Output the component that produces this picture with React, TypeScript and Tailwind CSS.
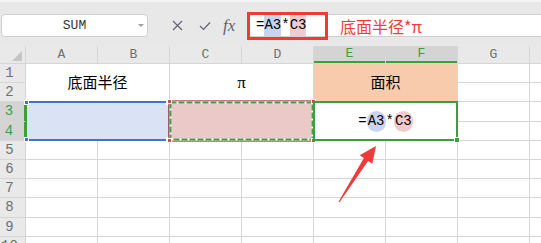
import React from "react";

const COLS = ["A", "B", "C", "D", "E", "F", "G", ""];
const mono = "[font-family:'Liberation_Mono',monospace]";

function ColHeader({ label }: { label: string }) {
  const sel = label === "E" || label === "F";
  return (
    <div
      className={`flex items-center justify-center text-[13px] ${mono} ${
        sel ? "bg-[#d4d4d4] text-[#3c9e3c] border-b-2 border-[#3c9e3c]" : "bg-[#e9e9e9] text-[#707070]"
      }`}
    >
      {label}
    </div>
  );
}

function RowHeader({ n }: { n: number }) {
  const sel = n === 3 || n === 4;
  return (
    <div
      className={`flex items-center justify-center pr-[6px] text-[14px] ${mono} ${
        sel ? "bg-[#d4d4d4] text-[#3c9e3c] border-r border-[#3c9e3c]" : "bg-[#e9e9e9] text-[#707070]"
      }`}
    >
      {n}
    </div>
  );
}

function Blank() {
  return <div className="bg-white" />;
}

function Toolbar() {
  return (
    <div className="h-[46px] bg-[#e8e8e8] border-t-2 border-[#f4f4f4] flex items-start pt-[12px]">
      <div
        className={`relative ml-px w-[147px] h-[23px] bg-white border border-[#d0d0d0] rounded-[4px] flex items-center justify-center text-[13px] text-[#333] ${mono}`}
      >
        SUM
        <span className="absolute right-[3px] top-[9px] border-x-[3px] border-t-[3px] border-x-transparent border-t-[#a0a0a0]" />
      </div>
      <div className="w-[99px] h-[23px] flex items-center shrink-0">
        <svg width="11" height="11" viewBox="0 0 11 11" className="ml-[24px]">
          <path d="M1 1L10 10M10 1L1 10" stroke="#5f6470" strokeWidth="1.2" fill="none" />
        </svg>
        <svg width="12" height="10" viewBox="0 0 12 10" className="ml-[16px]">
          <path d="M1 5L4.5 8.5L11 1.5" stroke="#5f6470" strokeWidth="1.2" fill="none" />
        </svg>
        <span className="ml-[12px] text-[17px] italic text-[#5f6470] [font-family:'Liberation_Serif',serif]">fx</span>
      </div>
      <div className="flex-1 h-[23px] bg-white border-y border-[#cfcfcf] flex items-center">
        <div className={`shrink-0 w-[81px] h-[28px] border-[3px] border-[#f03a3a] flex items-center pl-[6px] text-[14px] text-black ${mono}`}>
          =<span className="bg-[#c8d5f2]">A3</span>*<span className="bg-[#f0cccc]">C3</span>
        </div>
        <span className="ml-[12px] text-[16px] text-[#f23b3b] [font-family:'Noto_Sans_CJK_SC',sans-serif]">底面半径*π</span>
      </div>
    </div>
  );
}

function Sheet() {
  const handle = "absolute w-[5px] h-[5px] border border-white";
  return (
    <div className="grid grid-cols-[25px_repeat(7,71px)_20px] grid-rows-[17px_18px_18px_19px_18px_18px_18px_18px_19px_18px_18px] gap-px bg-[#d6d6d6]">
      <div className="relative bg-[#e9e9e9]">
        <svg width="10" height="10" viewBox="0 0 10 10" className="absolute right-[3px] bottom-[2px]">
          <path d="M10 0V10H0Z" fill="#c4c4c4" />
        </svg>
      </div>
      {COLS.map((c, i) => (
        <ColHeader key={i} label={c} />
      ))}

      {/* row 1 */}
      <RowHeader n={1} />
      <div className="col-span-2 row-span-2 bg-white flex items-center justify-center text-[15px] text-black">底面半径</div>
      <div className="col-span-2 row-span-2 bg-white flex items-center justify-center text-[17px] text-black [font-family:'Liberation_Serif',serif]">π</div>
      <div className="col-span-2 row-span-2 bg-[#f8cbad] flex items-center justify-center text-[15px] text-black">面积</div>
      <Blank />
      <Blank />

      {/* row 2 */}
      <RowHeader n={2} />
      <Blank />
      <Blank />

      {/* row 3 */}
      <RowHeader n={3} />
      <div className="relative z-10 col-span-2 row-span-2 bg-[#dae3f3]">
        <div className="absolute -inset-px border-2 border-[#4472c4] border-l-[#3c9e3c]" />
        <span className={`${handle} -left-[2px] -top-[2px] bg-[#4472c4]`} />
        <span className={`${handle} -right-[2px] -top-[2px] bg-[#4472c4]`} />
        <span className={`${handle} -left-[2px] -bottom-[2px] bg-[#4472c4]`} />
        <span className={`${handle} -right-[2px] -bottom-[2px] bg-[#4472c4]`} />
      </div>
      <div className="relative z-20 col-span-2 row-span-2 bg-[#ecc9c9]">
        <svg width="147" height="42" viewBox="0 0 147 42" className="absolute -left-[2px] -top-[2px]">
          <rect x="1" y="1" width="145" height="40" fill="none" stroke="#c4504f" strokeWidth="1.5" />
          <rect x="2.5" y="2.5" width="142" height="37" fill="none" stroke="#ffffff" strokeWidth="2" />
          <rect x="2.5" y="2.5" width="142" height="37" fill="none" stroke="#3fa046" strokeWidth="2" strokeDasharray="6 2" />
        </svg>
        <span className={`${handle} -left-[3px] -top-[3px] bg-[#c4504f]`} />
        <span className={`${handle} -right-[3px] -top-[3px] bg-[#c4504f]`} />
        <span className={`${handle} -left-[3px] -bottom-[3px] bg-[#c4504f]`} />
        <span className={`${handle} -right-[3px] -bottom-[3px] bg-[#c4504f]`} />
      </div>
      <div className={`relative z-30 col-span-2 row-span-2 bg-white flex items-center justify-center text-[14px] text-black ${mono}`}>
        =<span className="rounded-full bg-[#c8d5f2] px-px">A3</span>*<span className="rounded-full bg-[#f1cbcb] px-px">C3</span>
        <div className="absolute -inset-px border-2 border-[#3c9e3c]" />
        <span className="absolute -right-[3px] -bottom-[3px] w-[6px] h-[6px] bg-[#3c9e3c] border border-white" />
      </div>
      <Blank />
      <Blank />

      {/* row 4 */}
      <RowHeader n={4} />
      <Blank />
      <Blank />

      {[5, 6, 7, 8, 9, 10].map((n) => (
        <React.Fragment key={n}>
          <RowHeader n={n} />
          {COLS.map((_, i) => (
            <Blank key={i} />
          ))}
        </React.Fragment>
      ))}
    </div>
  );
}

function Arrow() {
  return (
    <svg width="541" height="243" viewBox="0 0 541 243" className="absolute left-0 top-0 pointer-events-none z-40">
      <polygon
        points="376,146 372.3,163.7 368.1,160.9 339.5,202.3 338.5,201.7 363.9,158.1 359.7,155.3"
        fill="#f03a3a"
      />
    </svg>
  );
}

export default function App() {
  return (
    <div className="relative w-[541px] h-[243px] overflow-hidden bg-white [font-family:'Noto_Sans_CJK_SC',sans-serif]">
      <Toolbar />
      <Sheet />
      <Arrow />
    </div>
  );
}
